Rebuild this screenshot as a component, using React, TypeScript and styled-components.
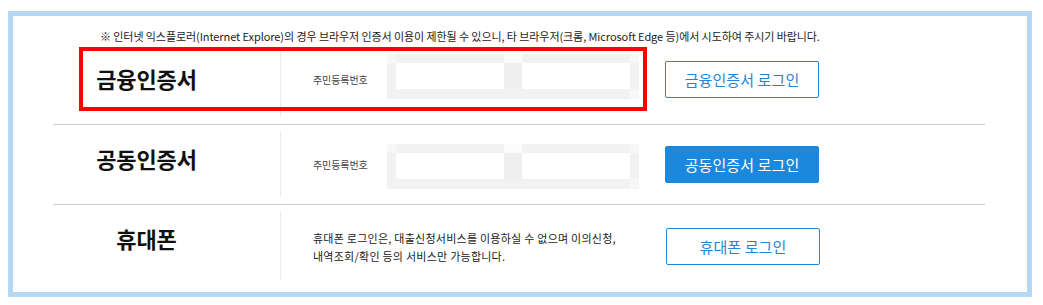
import React from "react";
import styled, { createGlobalStyle } from "styled-components";

const Global = createGlobalStyle`
  html, body { margin: 0; padding: 0; background: #fff; }
  body { font-family: "Noto Sans CJK KR", "Noto Sans", sans-serif; color: #222; }
  * { box-sizing: border-box; }
`;

const Page = styled.div`
  padding: 11px 0 0 8px;
`;

const Frame = styled.section`
  position: relative;
  width: 1024px;
  height: 286px;
  border: 5px solid #b5d9f5;
  padding: 12px 42px 3px 40px;
`;

const Notice = styled.p`
  margin: 0 0 0 47px;
  height: 16px;
  line-height: 16px;
  font-size: 11px;
  letter-spacing: -0.08px;
  color: #222;
  white-space: nowrap;
`;

const Row = styled.div<{ $first?: boolean }>`
  display: grid;
  grid-template-columns: 227px 1fr;
  border-top: ${(p) => (p.$first ? "none" : "1px solid #c9c9c9")};
  padding: ${(p) => (p.$first ? "8px 0 8px" : "7px 0 8px")};
`;

const Title = styled.h2`
  margin: 0;
  padding: 11px 40px 0 0;
  text-align: center;
  font-size: 22px;
  line-height: 30px;
  font-weight: 700;
  letter-spacing: -0.1px;
  color: #111;
`;

const Cell = styled.div<{ $h: number; $lift?: number }>`
  display: flex;
  align-items: center;
  height: ${(p) => p.$h}px;
  border-left: 1px solid #ebebeb;
  padding: 0 0 ${(p) => p.$lift ?? 0}px 32px;
`;

const Label = styled.span`
  width: 74px;
  font-size: 10px;
  letter-spacing: -0.1px;
  color: #444;
`;

const Mosaic = styled.div<{ $up?: number; $down?: number }>`
  display: grid;
  grid-template-columns: 9px 108px 18px 108px 9px;
  grid-template-rows: 9px 26px 10px;
  width: 252px;
  height: 45px;
  margin-top: ${(p) => p.$down ?? 0}px;
  margin-bottom: ${(p) => p.$up ?? 0}px;
  background: #f2f2f2;
`;

const Tile = styled.div<{ $c: string; $col: string; $row: string }>`
  grid-column: ${(p) => p.$col};
  grid-row: ${(p) => p.$row};
  background: ${(p) => p.$c};
`;

const Description = styled.p`
  width: 353px;
  margin: 0;
  font-size: 11px;
  line-height: 18px;
  letter-spacing: 0.25px;
  color: #222;
`;

const Button = styled.button<{ $filled?: boolean; $gap: number }>`
  width: 154px;
  height: 37px;
  margin-left: ${(p) => p.$gap}px;
  border: 1px solid #1c87db;
  border-radius: 2px;
  background: ${(p) => (p.$filled ? "#1a88dc" : "#fff")};
  color: ${(p) => (p.$filled ? "#fff" : "#1f86d7")};
  font-family: "Noto Sans CJK KR", "Noto Sans", sans-serif;
  font-size: 15px;
  letter-spacing: 0.1px;
  padding: 0;
  cursor: pointer;
`;

const Highlight = styled.div`
  position: absolute;
  left: 66px;
  top: 31px;
  width: 568px;
  height: 64px;
  border: 4px solid #ff0000;
  pointer-events: none;
`;

function InputMosaic({ up, down }: { up?: number; down?: number }) {
  return (
    <Mosaic $up={up} $down={down}>
      <Tile $c="#f7f7f7" $col="1" $row="1" />
      <Tile $c="#ffffff" $col="2" $row="2" />
      <Tile $c="#fbfbfb" $col="3" $row="1" />
      <Tile $c="#efefef" $col="3" $row="2" />
      <Tile $c="#ffffff" $col="4" $row="2" />
      <Tile $c="#f7f7f7" $col="5" $row="1" />
      <Tile $c="#f7f7f7" $col="5" $row="3" />
    </Mosaic>
  );
}

export default function App() {
  return (
    <Page>
      <Global />
      <Frame>
        <Notice>
          ※ 인터넷 익스플로러(Internet Explore)의 경우 브라우저 인증서 이용이 제한될 수 있으니, 타 브라우저(크롬, Microsoft Edge 등)에서 시도하여 주시기 바랍니다.
        </Notice>
        <Row $first>
          <Title>금융인증서</Title>
          <Cell $h={64} $lift={9}>
            <Label>주민등록번호</Label>
            <InputMosaic up={6} />
            <Button $gap={26}>금융인증서 로그인</Button>
          </Cell>
        </Row>
        <Row>
          <Title>공동인증서</Title>
          <Cell $h={64}>
            <Label>주민등록번호</Label>
            <InputMosaic down={4} />
            <Button $filled $gap={26}>공동인증서 로그인</Button>
          </Cell>
        </Row>
        <Row>
          <Title>휴대폰</Title>
          <Cell $h={69}>
            <Description>
              휴대폰 로그인은, 대출신청서비스를 이용하실 수 없으며 이의신청,
              <br />
              내역조회/확인 등의 서비스만 가능합니다.
            </Description>
            <Button $gap={0}>휴대폰 로그인</Button>
          </Cell>
        </Row>
        <Highlight />
      </Frame>
    </Page>
  );
}
